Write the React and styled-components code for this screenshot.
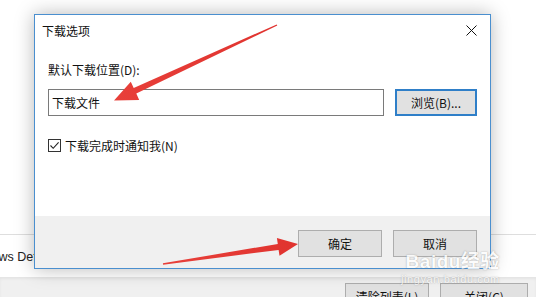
import React from 'react'
import styled, { createGlobalStyle } from 'styled-components'

const GlobalStyle = createGlobalStyle`
  html, body {
    margin: 0;
    padding: 0;
    background: #fff;
    overflow: hidden;
  }
  * { box-sizing: border-box; }
`

const FONT = `"Microsoft YaHei UI", "Noto Sans CJK SC", "Liberation Sans", sans-serif`

const Screen = styled.div`
  position: relative;
  width: 536px;
  height: 297px;
  overflow: hidden;
  font-family: ${FONT};
  font-size: 12px;
  color: #000;
  display: flex;
  flex-direction: column;
  background: #fff;
`

// parent window behind the dialog
const ParentTop = styled.div`
  flex-shrink: 0;
  height: 235px;
  border-bottom: 1px solid #dedede;
`

const ParentRow = styled.div`
  flex-shrink: 0;
  height: 42px;
  display: flex;
  align-items: center;
  padding-top: 2px;
  font-family: "Liberation Sans", sans-serif;
  font-size: 12.5px;
  color: #222;
  span {
    margin-left: -37px;
    white-space: nowrap;
  }
`

const ParentFooter = styled.div`
  flex: 1;
  min-height: 0;
  overflow: hidden;
  background: #f0f0f0;
  display: flex;
  justify-content: flex-end;
  gap: 11px;
  padding: 6px 8px 0 0;
  box-shadow: inset 0 2px 3px rgba(0, 0, 0, 0.05);
`

const Button = styled.div`
  width: ${(p) => p.$w || 84}px;
  height: ${(p) => p.$h || 27}px;
  flex-shrink: 0;
  display: flex;
  align-items: center;
  justify-content: center;
  background: #e1e1e1;
  border: ${(p) => (p.$focus ? '2px solid #2f7fc8' : '1px solid #adadad')};
  font-size: 12px;
  color: #111;
  align-self: flex-start;
`

// the dialog
const Dialog = styled.div`
  position: absolute;
  left: 34px;
  top: 14px;
  width: 457px;
  height: 255px;
  background: #fff;
  border: 1px solid #4a8fcf;
  box-shadow: 0 0 18px rgba(0, 0, 0, 0.28);
  display: flex;
  flex-direction: column;
`

const TitleBar = styled.div`
  height: 30px;
  display: flex;
  align-items: center;
  justify-content: space-between;
  padding: 0 8px 0 7px;
  font-size: 12px;
  color: #111;
`

const CloseBtn = styled.div`
  width: 22px;
  height: 22px;
  display: flex;
  align-items: center;
  justify-content: center;
`

const Body = styled.div`
  flex: 1;
  padding: 17px 13px 0 13px;
  display: flex;
  flex-direction: column;
`

const Label = styled.div`
  height: 16px;
  line-height: 16px;
  font-size: 12px;
  color: #111;
`

const PathRow = styled.div`
  margin-top: 11px;
  display: flex;
  gap: 11px;
`

const PathInput = styled.div`
  width: 336px;
  height: 27px;
  border: 1px solid #7a7a7a;
  display: flex;
  align-items: center;
  padding-left: 3px;
  font-size: 12px;
  color: #111;
`

const CheckRow = styled.div`
  margin-top: 21px;
  display: flex;
  align-items: center;
  gap: 4px;
  font-size: 12px;
  color: #111;
`

const CheckBox = styled.div`
  width: 13px;
  height: 13px;
  border: 1px solid #333;
  display: flex;
  align-items: center;
  justify-content: center;
  background: #fff;
`

const Footer = styled.div`
  height: 52px;
  background: #f0f0f0;
  display: flex;
  justify-content: flex-end;
  gap: 11px;
  padding: 14px 13px 0 0;
`

const Overlay = styled.svg`
  position: absolute;
  left: 0;
  top: 0;
  pointer-events: none;
`

const Watermark = styled.div`
  position: absolute;
  left: 401px;
  top: 251px;
  display: flex;
  flex-direction: column;
  align-items: flex-end;
  color: #fff;
  pointer-events: none;
  text-shadow: 0 0 1px rgba(90, 90, 90, 0.45), 0 0 2px rgba(90, 90, 90, 0.3);
`

const WmMain = styled.div`
  font-family: "Liberation Sans", "Noto Sans CJK SC", sans-serif;
  font-weight: bold;
  font-size: 19px;
  line-height: 22px;
  letter-spacing: 0.5px;
  opacity: 0.8;
`

const WmSub = styled.div`
  font-family: "Liberation Sans", sans-serif;
  font-size: 11px;
  line-height: 12px;
  letter-spacing: 0.6px;
  opacity: 0.75;
`

const Arrow = ({ points }) => (
  <polygon points={points} fill="url(#red)" />
)

export default function App() {
  return (
    <>
      <GlobalStyle />
      <Screen>
        <ParentTop />
        <ParentRow>
          <span>Windows Defender SmartScreen</span>
        </ParentRow>
        <ParentFooter>
          <Button $w={84}>清除列表(L)</Button>
          <Button $w={88}>关闭(C)</Button>
        </ParentFooter>

        <Dialog>
          <TitleBar>
            <span>下载选项</span>
            <CloseBtn>
              <svg width="11" height="11" viewBox="0 0 11 11">
                <path d="M0.5 0.5 L10.5 10.5 M10.5 0.5 L0.5 10.5" stroke="#111" strokeWidth="1" />
              </svg>
            </CloseBtn>
          </TitleBar>
          <Body>
            <Label>默认下载位置(D):</Label>
            <PathRow>
              <PathInput>下载文件</PathInput>
              <Button $w={82} $focus>浏览(B)...</Button>
            </PathRow>
            <CheckRow>
              <CheckBox>
                <svg width="11" height="11" viewBox="0 0 11 11">
                  <path d="M1.5 5.5 L4.2 8.3 L9.6 2.4" fill="none" stroke="#222" strokeWidth="1.1" />
                </svg>
              </CheckBox>
              <span>下载完成时通知我(N)</span>
            </CheckRow>
          </Body>
          <Footer>
            <Button $w={84}>确定</Button>
            <Button $w={84}>取消</Button>
          </Footer>
        </Dialog>

        <Watermark>
          <WmMain>Baidu经验</WmMain>
          <WmSub>jingyan.baidu.com</WmSub>
        </Watermark>

        <Overlay width="536" height="297" viewBox="0 0 536 297">
          <defs>
            <linearGradient id="red" x1="0" y1="0" x2="1" y2="0">
              <stop offset="0" stopColor="#e8403a" />
              <stop offset="1" stopColor="#e0332f" />
            </linearGradient>
          </defs>
          <Arrow points="277.3,25.6 136.3,93.5 139.2,99.9 114,100.5 130.8,81.7 133.7,88.1 276.7,24.4" />
          <Arrow points="163.1,264.7 278.6,249.9 279.5,255.8 298,244 276.9,238 277.8,243.9 162.9,263.3" />
        </Overlay>
      </Screen>
    </>
  )
}
